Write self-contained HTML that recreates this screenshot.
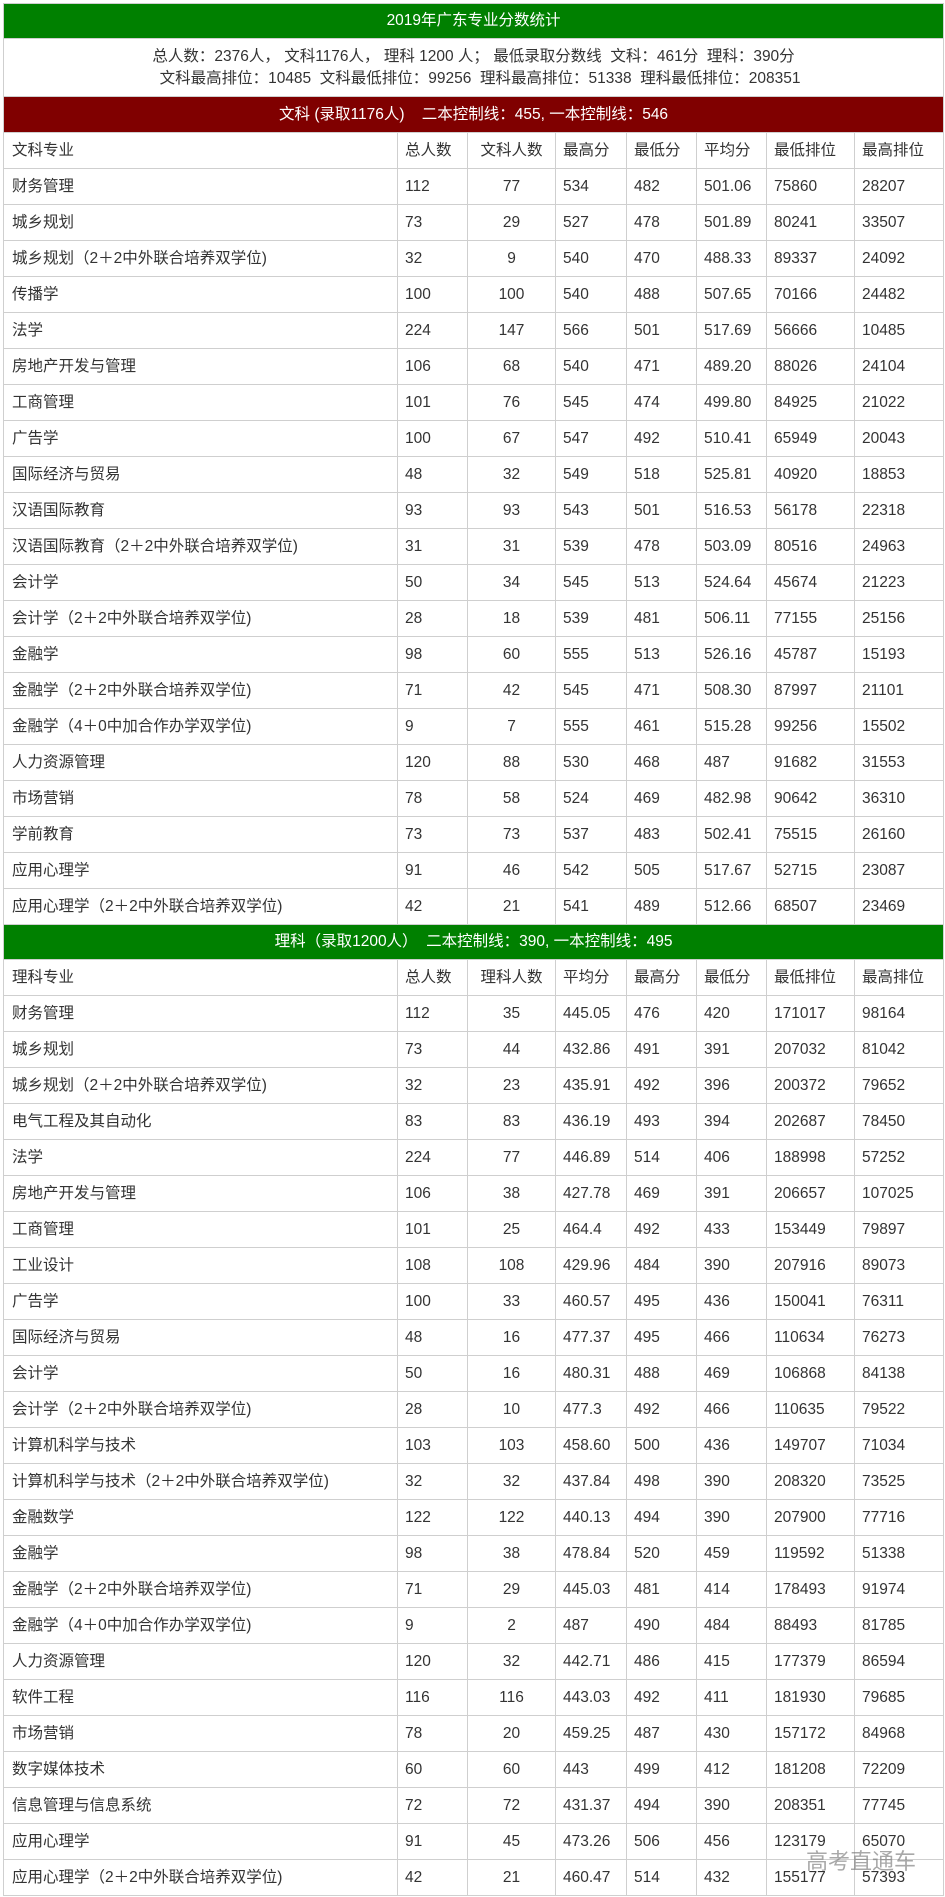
<!DOCTYPE html>
<html><head><meta charset="utf-8"><style>
body{margin:0;background:#fff;width:945px;height:1897px;overflow:hidden;position:relative;font-family:"Liberation Sans","Noto Sans CJK SC",sans-serif;font-size:15.5px;color:#333}
table{position:absolute;left:3px;top:3px;border-collapse:collapse;table-layout:fixed;width:940px}
td{border:1px solid #cfcfcf;height:35px;padding:0 0 0 7px;white-space:nowrap;overflow:hidden;line-height:20px}
td:first-child{padding-left:8px}
td:nth-child(3){text-align:center;padding:0}
.t{background:#008000;color:#fff;text-align:center!important;padding:0!important;height:34px}
.r{background:#800000;color:#fff;text-align:center!important;padding:0!important}
.i{text-align:center!important;padding:0!important;height:57px;line-height:22px;font-size:15.5px}
.wm{position:absolute;left:806px;top:1844px;font-size:22px;color:rgba(110,110,110,.6);font-family:"Noto Sans CJK SC",sans-serif}
</style></head><body>
<table>
<colgroup><col style="width:394px"><col style="width:70px"><col style="width:88px"><col style="width:71px"><col style="width:70px"><col style="width:70px"><col style="width:88px"><col style="width:89px"></colgroup>
<tr><td colspan="8" class="t">2019年广东专业分数统计</td></tr>
<tr><td colspan="8" class="i">总人数：2376人， 文科1176人， 理科 1200 人； 最低录取分数线&nbsp; 文科：461分&nbsp; 理科：390分<br>&nbsp;&nbsp;&nbsp;文科最高排位：10485&nbsp; 文科最低排位：99256&nbsp; 理科最高排位：51338&nbsp; 理科最低排位：208351</td></tr>
<tr><td colspan="8" class="r">文科 (录取1176人)&nbsp;&nbsp;&nbsp; 二本控制线：455, 一本控制线：546</td></tr>
<tr><td>文科专业</td><td>总人数</td><td>文科人数</td><td>最高分</td><td>最低分</td><td>平均分</td><td>最低排位</td><td>最高排位</td></tr>
<tr><td>财务管理</td><td>112</td><td>77</td><td>534</td><td>482</td><td>501.06</td><td>75860</td><td>28207</td></tr>
<tr><td>城乡规划</td><td>73</td><td>29</td><td>527</td><td>478</td><td>501.89</td><td>80241</td><td>33507</td></tr>
<tr><td>城乡规划（2＋2中外联合培养双学位)</td><td>32</td><td>9</td><td>540</td><td>470</td><td>488.33</td><td>89337</td><td>24092</td></tr>
<tr><td>传播学</td><td>100</td><td>100</td><td>540</td><td>488</td><td>507.65</td><td>70166</td><td>24482</td></tr>
<tr><td>法学</td><td>224</td><td>147</td><td>566</td><td>501</td><td>517.69</td><td>56666</td><td>10485</td></tr>
<tr><td>房地产开发与管理</td><td>106</td><td>68</td><td>540</td><td>471</td><td>489.20</td><td>88026</td><td>24104</td></tr>
<tr><td>工商管理</td><td>101</td><td>76</td><td>545</td><td>474</td><td>499.80</td><td>84925</td><td>21022</td></tr>
<tr><td>广告学</td><td>100</td><td>67</td><td>547</td><td>492</td><td>510.41</td><td>65949</td><td>20043</td></tr>
<tr><td>国际经济与贸易</td><td>48</td><td>32</td><td>549</td><td>518</td><td>525.81</td><td>40920</td><td>18853</td></tr>
<tr><td>汉语国际教育</td><td>93</td><td>93</td><td>543</td><td>501</td><td>516.53</td><td>56178</td><td>22318</td></tr>
<tr><td>汉语国际教育（2＋2中外联合培养双学位)</td><td>31</td><td>31</td><td>539</td><td>478</td><td>503.09</td><td>80516</td><td>24963</td></tr>
<tr><td>会计学</td><td>50</td><td>34</td><td>545</td><td>513</td><td>524.64</td><td>45674</td><td>21223</td></tr>
<tr><td>会计学（2＋2中外联合培养双学位)</td><td>28</td><td>18</td><td>539</td><td>481</td><td>506.11</td><td>77155</td><td>25156</td></tr>
<tr><td>金融学</td><td>98</td><td>60</td><td>555</td><td>513</td><td>526.16</td><td>45787</td><td>15193</td></tr>
<tr><td>金融学（2＋2中外联合培养双学位)</td><td>71</td><td>42</td><td>545</td><td>471</td><td>508.30</td><td>87997</td><td>21101</td></tr>
<tr><td>金融学（4＋0中加合作办学双学位)</td><td>9</td><td>7</td><td>555</td><td>461</td><td>515.28</td><td>99256</td><td>15502</td></tr>
<tr><td>人力资源管理</td><td>120</td><td>88</td><td>530</td><td>468</td><td>487</td><td>91682</td><td>31553</td></tr>
<tr><td>市场营销</td><td>78</td><td>58</td><td>524</td><td>469</td><td>482.98</td><td>90642</td><td>36310</td></tr>
<tr><td>学前教育</td><td>73</td><td>73</td><td>537</td><td>483</td><td>502.41</td><td>75515</td><td>26160</td></tr>
<tr><td>应用心理学</td><td>91</td><td>46</td><td>542</td><td>505</td><td>517.67</td><td>52715</td><td>23087</td></tr>
<tr><td>应用心理学（2＋2中外联合培养双学位)</td><td>42</td><td>21</td><td>541</td><td>489</td><td>512.66</td><td>68507</td><td>23469</td></tr>
<tr><td colspan="8" class="t">理科（录取1200人）&nbsp; 二本控制线：390, 一本控制线：495</td></tr>
<tr><td>理科专业</td><td>总人数</td><td>理科人数</td><td>平均分</td><td>最高分</td><td>最低分</td><td>最低排位</td><td>最高排位</td></tr>
<tr><td>财务管理</td><td>112</td><td>35</td><td>445.05</td><td>476</td><td>420</td><td>171017</td><td>98164</td></tr>
<tr><td>城乡规划</td><td>73</td><td>44</td><td>432.86</td><td>491</td><td>391</td><td>207032</td><td>81042</td></tr>
<tr><td>城乡规划（2＋2中外联合培养双学位)</td><td>32</td><td>23</td><td>435.91</td><td>492</td><td>396</td><td>200372</td><td>79652</td></tr>
<tr><td>电气工程及其自动化</td><td>83</td><td>83</td><td>436.19</td><td>493</td><td>394</td><td>202687</td><td>78450</td></tr>
<tr><td>法学</td><td>224</td><td>77</td><td>446.89</td><td>514</td><td>406</td><td>188998</td><td>57252</td></tr>
<tr><td>房地产开发与管理</td><td>106</td><td>38</td><td>427.78</td><td>469</td><td>391</td><td>206657</td><td>107025</td></tr>
<tr><td>工商管理</td><td>101</td><td>25</td><td>464.4</td><td>492</td><td>433</td><td>153449</td><td>79897</td></tr>
<tr><td>工业设计</td><td>108</td><td>108</td><td>429.96</td><td>484</td><td>390</td><td>207916</td><td>89073</td></tr>
<tr><td>广告学</td><td>100</td><td>33</td><td>460.57</td><td>495</td><td>436</td><td>150041</td><td>76311</td></tr>
<tr><td>国际经济与贸易</td><td>48</td><td>16</td><td>477.37</td><td>495</td><td>466</td><td>110634</td><td>76273</td></tr>
<tr><td>会计学</td><td>50</td><td>16</td><td>480.31</td><td>488</td><td>469</td><td>106868</td><td>84138</td></tr>
<tr><td>会计学（2＋2中外联合培养双学位)</td><td>28</td><td>10</td><td>477.3</td><td>492</td><td>466</td><td>110635</td><td>79522</td></tr>
<tr><td>计算机科学与技术</td><td>103</td><td>103</td><td>458.60</td><td>500</td><td>436</td><td>149707</td><td>71034</td></tr>
<tr><td>计算机科学与技术（2＋2中外联合培养双学位)</td><td>32</td><td>32</td><td>437.84</td><td>498</td><td>390</td><td>208320</td><td>73525</td></tr>
<tr><td>金融数学</td><td>122</td><td>122</td><td>440.13</td><td>494</td><td>390</td><td>207900</td><td>77716</td></tr>
<tr><td>金融学</td><td>98</td><td>38</td><td>478.84</td><td>520</td><td>459</td><td>119592</td><td>51338</td></tr>
<tr><td>金融学（2＋2中外联合培养双学位)</td><td>71</td><td>29</td><td>445.03</td><td>481</td><td>414</td><td>178493</td><td>91974</td></tr>
<tr><td>金融学（4＋0中加合作办学双学位)</td><td>9</td><td>2</td><td>487</td><td>490</td><td>484</td><td>88493</td><td>81785</td></tr>
<tr><td>人力资源管理</td><td>120</td><td>32</td><td>442.71</td><td>486</td><td>415</td><td>177379</td><td>86594</td></tr>
<tr><td>软件工程</td><td>116</td><td>116</td><td>443.03</td><td>492</td><td>411</td><td>181930</td><td>79685</td></tr>
<tr><td>市场营销</td><td>78</td><td>20</td><td>459.25</td><td>487</td><td>430</td><td>157172</td><td>84968</td></tr>
<tr><td>数字媒体技术</td><td>60</td><td>60</td><td>443</td><td>499</td><td>412</td><td>181208</td><td>72209</td></tr>
<tr><td>信息管理与信息系统</td><td>72</td><td>72</td><td>431.37</td><td>494</td><td>390</td><td>208351</td><td>77745</td></tr>
<tr><td>应用心理学</td><td>91</td><td>45</td><td>473.26</td><td>506</td><td>456</td><td>123179</td><td>65070</td></tr>
<tr><td>应用心理学（2＋2中外联合培养双学位)</td><td>42</td><td>21</td><td>460.47</td><td>514</td><td>432</td><td>155177</td><td>57393</td></tr>
</table>
<div class="wm">高考直通车</div>
</body></html>
